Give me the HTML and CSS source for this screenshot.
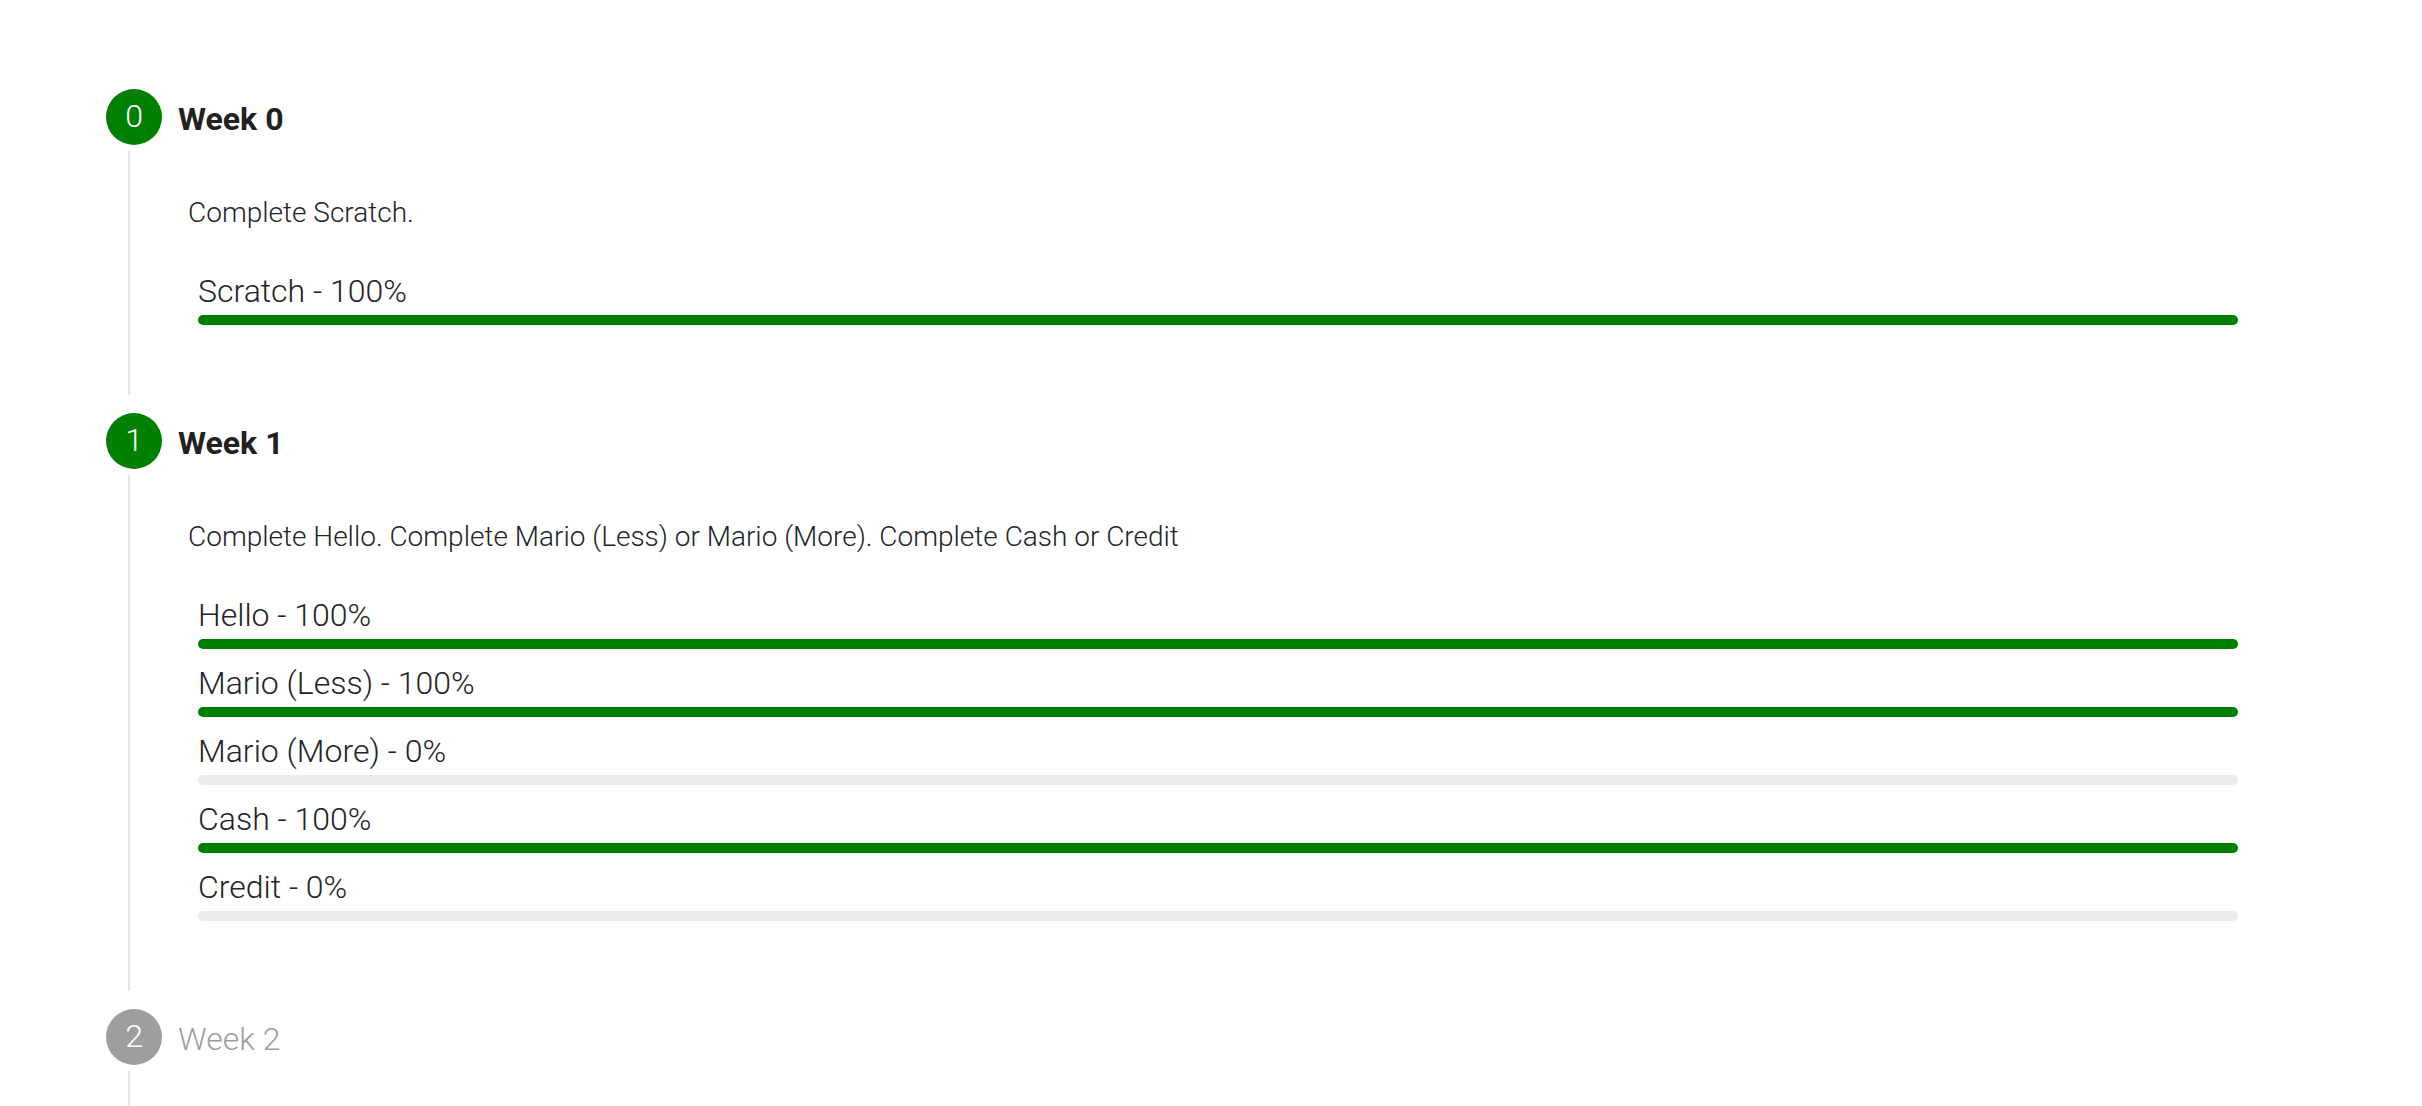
FILE: index.html
```html
<!DOCTYPE html>
<html lang="en">
<head>
<meta charset="utf-8">
<title>Weekly progress</title>
<link rel="stylesheet" href="styles.css">
</head>
<body>
<main class="stepper">
  <section class="step">
    <header class="step-header"><span class="badge">0</span><h2 class="title">Week 0</h2></header>
    <div class="step-body">
      <p class="hint">Complete Scratch.</p>
      <div class="task"><label for="scratch">Scratch - 100%</label><progress id="scratch" max="100" value="100"></progress></div>
    </div>
  </section>
  <section class="step">
    <header class="step-header"><span class="badge">1</span><h2 class="title">Week 1</h2></header>
    <div class="step-body">
      <p class="hint">Complete Hello. Complete Mario (Less) or Mario (More). Complete Cash or Credit</p>
      <div class="task"><label for="hello">Hello - 100%</label><progress id="hello" max="100" value="100"></progress></div>
      <div class="task"><label for="mario-less">Mario (Less) - 100%</label><progress id="mario-less" max="100" value="100"></progress></div>
      <div class="task"><label for="mario-more">Mario (More) - 0%</label><progress id="mario-more" max="100" value="0"></progress></div>
      <div class="task"><label for="cash">Cash - 100%</label><progress id="cash" max="100" value="100"></progress></div>
      <div class="task"><label for="credit">Credit - 0%</label><progress id="credit" max="100" value="0"></progress></div>
    </div>
  </section>
  <section class="step pending">
    <header class="step-header"><span class="badge">2</span><h2 class="title">Week 2</h2></header>
    <div class="step-body"></div>
  </section>
</main>
</body>
</html>
```
FILE: styles.css
```css
* { box-sizing: border-box; }
body {
  margin: 0;
  background: #fff;
  color: #212529;
  font-family: Roboto, "Liberation Sans", sans-serif;
  font-weight: 300;
}
.stepper {
  display: flex;
  flex-direction: column;
  min-height: 100vh;
  padding: 89px 184px 0 106px;
}
.step-header { display: flex; align-items: center; gap: 16px; height: 56px; }
.badge {
  width: 56px;
  height: 56px;
  border-radius: 50%;
  background: #008000;
  color: #fff;
  font-size: 32px;
  line-height: 54px;
  text-align: center;
}
.title {
  margin: 0;
  padding-top: 4px;
  color: #212121;
  font-size: 32px;
  line-height: 40px;
  font-weight: 700;
}
.step-body {
  margin: 6px 0 18px 22px;
  padding: 40px 0 68px 58px;
  border-left: 2px solid #e5e5e5;
}
.hint { margin: 0 0 24px; font-size: 28px; line-height: 44px; }
.task { margin-left: 10px; padding: 8px 0 2px; }
.task label { display: block; font-size: 32px; line-height: 48px; }
progress {
  display: block;
  appearance: none;
  width: 100%;
  height: 10px;
  border: 0;
  border-radius: 5px;
  background: #e9ecef;
  overflow: hidden;
}
progress::-webkit-progress-bar { background: #e9ecef; }
progress::-webkit-progress-value { background: #008000; }
.pending { display: flex; flex: 1; flex-direction: column; }
.pending .badge { background: #9e9e9e; }
.pending .title { color: #9e9e9e; font-weight: 300; }
.pending .step-body { flex: 1; margin-bottom: 0; padding: 0; }
```
